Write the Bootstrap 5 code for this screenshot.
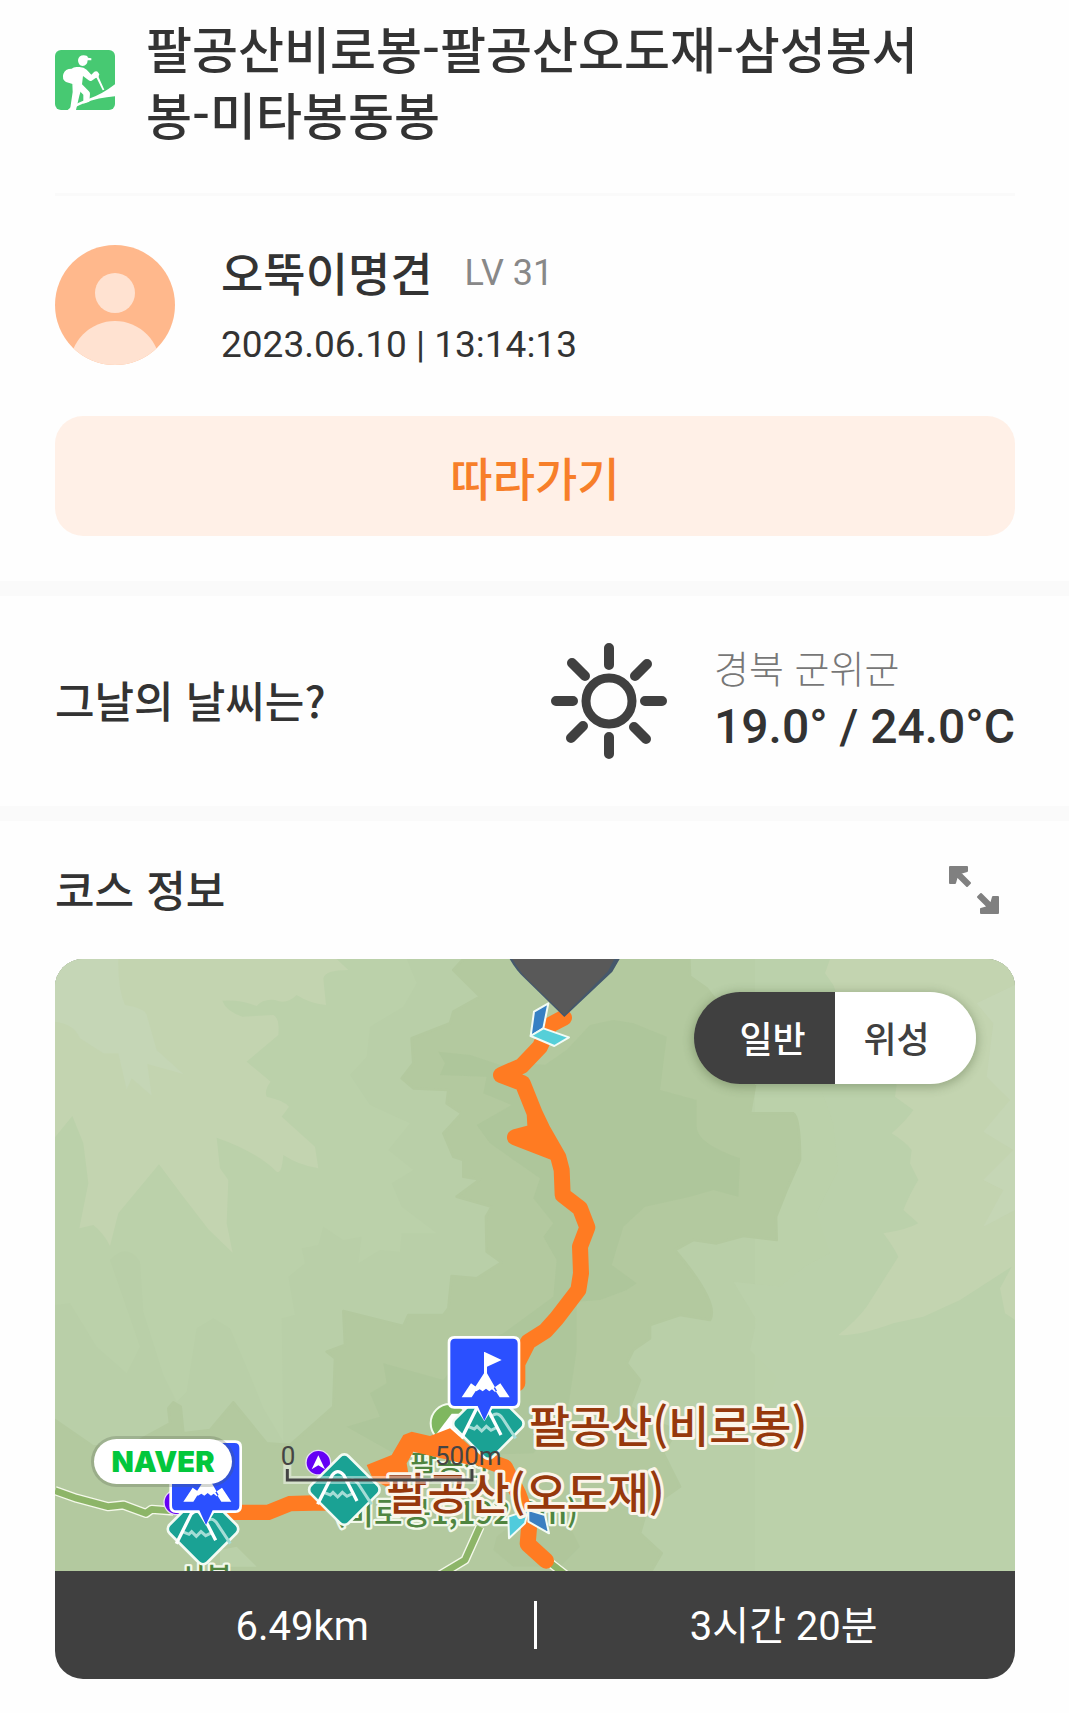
<!DOCTYPE html>
<html lang="ko">
<head>
<meta charset="utf-8">
<meta name="viewport" content="width=device-width, initial-scale=1">
<title>팔공산 코스 정보</title>
<link href="https://cdn.jsdelivr.net/npm/bootstrap@5.3.0/dist/css/bootstrap.min.css" rel="stylesheet">
<style>
  body { font-family: "Noto Sans CJK KR", sans-serif; color: #333; background: #fefefe; }
  .page-pad { padding-left: 55px; padding-right: 54px; }
  .figures { font-family: Roboto, "Noto Sans CJK KR", sans-serif; }
  .course-head { padding-top: 14px; padding-bottom: 47px; gap: 31px; }
  .course-title { font-size: 50px; line-height: 66px; font-weight: 500; max-width: 800px; word-break: break-all; }
  .thin-rule { height: 3px; background: #fafafa; }
  .profile { padding-top: 45px; gap: 46px; }
  .user-name { font-size: 46px; line-height: 60px; font-weight: 500; }
  .user-level { font-size: 36px; line-height: 56px; color: #888; }
  .user-date { font-size: 37px; line-height: 48px; margin-top: 20px; }
  .follow-btn { height: 120px; margin-top: 47px; margin-bottom: 45px; border: 0; border-radius: 28px; background: #fff0e7; color: #f77f2a; font-size: 46px; font-weight: 500; line-height: 60px; }
  .follow-btn:hover { background: #ffe6d7; color: #f77f2a; }
  .band { height: 15px; background: #fafafa; }
  .weather { height: 210px; }
  .section-title { font-size: 43px; line-height: 60px; font-weight: 500; }
  .weather-info { gap: 46px; }
  .region { font-size: 38px; line-height: 56px; font-weight: 300; color: #777; }
  .temps { font-size: 48px; line-height: 64px; font-weight: 500; }
  .course-bar { height: 138px; }
  .expand-btn { padding: 0 16px; border: 0; background: none; }
  .course-card { border-radius: 28px; margin-bottom: 34px; background: #404040; }
  .map-view { height: 612px; background: #bbd1aa; }
  .map-toggle { top: 33px; right: 39px; width: 282px; height: 92px; border-radius: 46px; box-shadow: 0 2px 10px 2px rgba(60,80,40,.3); }
  .map-toggle button { width: 50%; border: 0; font-size: 36px; line-height: 50px; font-weight: 500; background: #fff; color: #404040; padding: 0 18px 2px 0; }
  .map-toggle button.on { background: #404040; color: #fff; padding: 0 0 2px 16px; }
  .naver-pill { left: 39px; top: 480px; width: 138px; height: 45px; border-radius: 23px; background: #fff; color: #03c73c; font-family: Inter, sans-serif; font-weight: 900; font-size: 29px; line-height: 45px; box-shadow: 0 0 0 3px rgba(80,90,70,.25); }
  .stats { height: 108px; color: #fff; font-size: 40px; line-height: 60px; }
  .stat-rule { width: 3px; height: 48px; background: #fff; }
</style>
<script src="https://cdn.jsdelivr.net/npm/bootstrap@5.3.0/dist/js/bootstrap.bundle.min.js"></script>
</head>
<body>
<main>
  <section class="page-pad">
    <header class="course-head d-flex align-items-center">
      <svg class="flex-shrink-0" width="60" height="60" viewBox="0 0 180 180" aria-hidden="true">
        <rect width="180" height="180" rx="18" fill="#47c972"/>
        <g fill="#fff">
          <path d="M69 30q2-14 17-14 11 0 13 7l10 2v6H98q-1 16-15 17-14-1-14-18z"/>
          <path d="M50 56q6-6 18-5 17-2 27 8l14 15 9-9q8-3 12 3l3 5-3 9-8 2-12 8q-5 2-9-1L84 78l-3 25 20 20q4 4 4 8l-2 24-18 6 0-27-22-22-8-9-22-7q-13-8-8-24 5-16 25-16z"/>
          <path d="M52 100l27 17-6 20-10 43H45l8-54z"/>
          <path d="M122 78l6-3 20 44-5 2z"/>
          <path d="M38 180q20-20 62-33 40-13 80-44v36q-50 4-92 20-20 8-42 21z"/>
        </g>
      </svg>
      <h1 class="course-title mb-0">팔공산비로봉-팔공산오도재-삼성봉서봉-미타봉동봉</h1>
    </header>
    <div class="thin-rule"></div>
    <div class="profile d-flex align-items-center">
      <svg class="flex-shrink-0" width="120" height="120" viewBox="0 0 120 120" role="img" aria-label="프로필">
        <clipPath id="face"><circle cx="60" cy="60" r="60"/></clipPath>
        <g clip-path="url(#face)"><rect width="120" height="120" fill="#ffb88c"/><circle cx="60" cy="48" r="20" fill="#ffe2d1"/><circle cx="60" cy="121" r="45" fill="#ffe2d1"/></g>
      </svg>
      <div>
        <div class="d-flex align-items-center">
          <span class="user-name">오뚝이명견</span>
          <span class="user-level figures ms-4 ps-2 pt-1">LV 31</span>
        </div>
        <div class="user-date figures">2023.06.10 | 13:14:13</div>
      </div>
    </div>
    <button type="button" class="btn follow-btn w-100">따라가기</button>
  </section>
  <div class="band"></div>
  <section class="weather page-pad d-flex align-items-center justify-content-between">
    <h2 class="section-title mb-0 pb-1">그날의 날씨는?</h2>
    <div class="weather-info d-flex align-items-center">
      <svg width="118" height="118" viewBox="-59 -59 118 118" role="img" aria-label="맑음">
        <g fill="none" stroke="#404040"><circle r="23" stroke-width="9"/>
        <path stroke-width="10" stroke-linecap="round" d="M0-53v17M0 53v-17M-53 0h17M53 0h-17M-37-38l13 13M38-37l-12 12M-38 37l12-12M37 38l-12-12"/></g>
      </svg>
      <div class="pb-1">
        <div class="region">경북 군위군</div>
        <div class="temps figures">19.0° / 24.0°C</div>
      </div>
    </div>
  </section>
  <div class="band"></div>
  <section class="page-pad">
    <div class="course-bar d-flex align-items-center justify-content-between">
      <h2 class="section-title mb-0 pb-1">코스 정보</h2>
      <button type="button" class="expand-btn" aria-label="지도 확대">
        <svg class="d-block" width="50" height="50" viewBox="0 0 50 50" fill="none" stroke="#808080" stroke-linejoin="round"><path fill="#808080" stroke-width="2" d="M1 2h17v4l-7 2 10 10-3 3L8 11l-2 7H1zM49 48H32v-4l7-2-10-10 3-3 10 10 2-7h5z"/></svg>
      </button>
    </div>
    <div class="course-card overflow-hidden">
      <div class="map-view position-relative overflow-hidden">
        <svg class="d-block" width="100%" height="612" viewBox="0 0 2880 1836" preserveAspectRatio="xMidYMid slice" role="img" aria-label="코스 지도">
          <defs>
            <g id="peak">
              <rect x="-80" y="-80" width="160" height="160" rx="18" transform="rotate(45)" fill="#1aa294" stroke="#f3fbf3" stroke-width="8"/>
              <path d="M6-18Q26-42 44-14L82 44M-62 8l20 8 8-8 14 14 14-14 14 12 20-10" fill="none" stroke="#a5ddd6" stroke-width="9"/>
              <path d="M-80 44l44-88q16-20 34 0l40 78" fill="none" stroke="#fff" stroke-width="10"/>
            </g>
            <g id="summit">
              <path d="M16-4h178q20 0 20 20v178q0 20-20 20h-64l-24 38-24-38H16q-20 0-20-20V16Q-4-4 16-4z" fill="#fff"/>
              <path d="M18 4h174q14 0 14 14v174q0 14-14 14h-66l-20 44-20-44H18q-14 0-14-14V18Q4 4 18 4z" fill="#2b50ff"/>
              <path d="M107 44l51 24-44 20v20l30 52-6 4-9-8-8 6-10-8-10 8-9-6-10 6-8-6 31-48V44zM38 180l28-42 20 14 -18 28zM182 180l-28-42-20 14 18 28z" fill="#fff"/>
            </g>
            <g id="nav"><circle r="37" fill="#6500f5" stroke="#e9ddf5" stroke-width="4"/><path d="M0-22L20 20 0 8l-20 12z" fill="#fff"/></g>
          </defs>
          <!-- terrain, left and centre -->
          <g transform="translate(-15 -27)" stroke-linejoin="round">
            <path fill="#b9cfa8" d="M1070 27l30 73-40 70-100 60-10 90-50 55 60 90 120 55-65 80 75 60-65 40 30 70 105 80-105 0-5 55-60-5-65 40 10-80-55 10-60-40-15 55-50 10 10 45-50 40 20 115-40 10 5 370-60-100-40-100-60-140-50-30-50 30-30 190-30 30-40-80-60-190-10-150q-40-60-90-5L270 1190l-40 80-90-80L60 1060l-45 5v800h2100V27z"/>
            <path fill="#c3d4b0" d="M15 27h845l35 33q-70 0-75 25l8 80q-50-5-88-30-30 30-65 15-35-5-55 18-50-20-103-16 10 30 60 48l93-5q20 10 15 60l-95 80 72 60q-20 25-12 45 50 10 67 30l-22 30 100 90 10 65q-60-10-105-40-5 60-20 50-60-60-180-102l10 92 25 35-5 130 18 88-73-70-75-98-73-97-122 147-25 98q-20-40-50-63l-42 10 27-135-15-120-33-82-52 64z"/>
            <path fill="#c5d6b6" d="M15 27h190q-2 90 20 138 60 10 65 30l30 105 80 72-108-30 13 95-60-52-15 33-25-108h-45l-70-45q-20-45-75-50z"/>
            <path fill="#b3c99f" stroke="#b3c99f" stroke-width="8" d="M1240 27L1210 60 1290 140 1210 185 1200 220 1085 265 1090 340 1055 385 1090 415 1195 420 1190 460 1235 490 1180 550 1210 620 1240 630 1240 680 1290 688 1220 740 1325 770 1308 800 1310 905 1355 937 1280 985 1205 978 1195 1075 1180 1095 1075 1095 1060 1128 880 1083 885 1185 830 1205 855 1225 850 1370 760 1450 720 1485 650 1480 550 1357 480 1440 400 1450 392 1370 370 1357 355 1375 360 1420 250 1480 130 1490 15 1410V1870H1800L1835 1810 1770 1750 1790 1680 1890 1610 1840 1510 1880 1440 1800 1410 1740 1370 1770 1290 1730 1240 1750 1200 1800 1165 1800 1125 1890 1095 1980 1110Q2010 1060 1875 900L1930 870 2000 880 2080 858 2180 870 2178 800 2210 720 2250 630Q2250 500 2230 490H2100L2115 405 2115 300 1970 115 1920 80 1918 27z"/>
          </g>
          <g transform="translate(1335 -27)">
            <path fill="#adc59a" opacity=".85" d="M340 210L270 225 200 300 135 345 80 340 0 345-90 315-185 305-165 340-180 375-40 380-50 430 35 465-70 525-30 580 120 685 100 745 160 820 130 860 170 930 160 1040 10 1150-100 1200-170 1290-350 1240-340 1300-390 1330-360 1400-460 1430-300 1520 100 1510 200 1400 230 1200 230 1055 300 1050 380 1020 410 1000 335 945 370 830 435 770 570 740 640 720 715 740 720 625Q590 580 590 530V450L480 420 500 260 400 220z"/>
            <path fill="#adc59a" opacity=".6" d="M-10 1760l-10 40 60 50h140l60-60-40-80-120-20z"/>
            <path fill="#bad0a9" d="M-840 1800l50-10 60 60h-110z"/>
          </g>
          <!-- terrain, east side -->
          <g transform="translate(1335 -27)">
            <path fill="#bcd1ab" opacity=".8" d="M765 27v378l200 15 35 100 15 140-65 130 40 120-75 40-75 60-140-15 70 115-20 90 80 80-40 120h750V27z"/>
            <path fill="#c3d4b0" d="M990 27L975 70 1000 105 1060 260 1190 405 1185 440 1240 480Q1220 510 1175 550 1215 575 1235 600L1230 640 1255 690Q1230 730 1210 780L1255 820Q1220 840 1150 850 1180 890 1195 920 1170 960 1100 1070 1070 1110 1015 1155 1070 1160 1180 1120L1270 1100 1380 1050 1535 950 1500 1015 1515 1090 1545 1110V27z"/>
            <path fill="#c5d6b6" opacity=".8" d="M1545 105l-115 55 50 60-20 160 70 70-80 95 90 55-90 90 60 30-60 110 95-50z"/>
          </g>
          <!-- footpaths -->
          <g fill="none" stroke-linejoin="round">
            <g stroke="#f4f8ea" stroke-width="28"><path d="M0 1595l65 23 95 25 45-5 68 25 17-12 65 5"/><path d="M1275 1703l-45 100-75 45M1445 1780l90 70"/></g>
            <g stroke="#8db568" stroke-width="20"><path d="M0 1595l65 23 95 25 45-5 68 25 17-12 65 5"/><path d="M1275 1703l-45 100-75 45M1445 1780l90 70"/></g>
          </g>
          <circle cx="1185" cy="1393" r="58" fill="#7fb75f" stroke="#f4fbee" stroke-width="6"/>
          <path d="M1140 1430l50-66h30v70z" fill="#fff"/>
          <!-- summit name printed on the base map -->
          <g font-family="Noto Sans CJK KR, sans-serif" font-weight="500" fill="#4f8540" stroke="#f2f8ea" stroke-width="14" stroke-linejoin="round" paint-order="stroke">
            <text x="1066" y="1552" font-size="87">팔공산</text>
            <text x="838" y="1696" font-size="93">(비로봉1,192.3m)</text>
            <text x="372" y="1890" font-size="87">서봉</text>
          </g>
          <!-- recorded track -->
          <g fill="none" stroke="#ff7b22" stroke-width="48" stroke-linecap="round" stroke-linejoin="round">
            <path transform="translate(1335 -27)" d="M192 203L150 225 120 290 65 348 3 375 68 400 104 490 107 545 45 562 165 608 128 540 104 490 128 540 175 622 185 660 188 735 240 775 262 832 240 890 243 970 235 1020 170 1105 137 1142 85 1175 52 1240 52 1300"/>
            <path d="M1275 1497l75 28 40 80 33 90-5 60 55 50"/>
            <path d="M860 1632l-85 0-70 2-65 26h-110" stroke-width="46" stroke-linejoin="miter"/>
            <path d="M935 1518l75-30 35-60 25-10 55 13 60-23 90 80-30 30-170-40-20 35 5 30-65 40-40-20z" fill="#ff7b22" stroke="none"/>
          </g>
          <path d="M1364 0q20 35 45 58l119 116L1672 38l22-38z" fill="#45586c"/>
          <path d="M1372 0q20 35 42 58l114 110L1658 38l20-38z" fill="#595959"/>
          <g stroke="#f2fbf5" stroke-width="6" stroke-linejoin="round">
            <path d="M1437 158l43-25-15 75-38 23z" fill="#3680c4"/><path d="M1427 231l38-23 77 27-44 26z" fill="#56cfd8"/>
            <path d="M1360 1673l60-20-10 40-48 45z" fill="#50cbdc"/><path d="M1420 1653l50 15 12 55-62-35z" fill="#3b7fc1"/>
          </g>
          <use href="#nav" x="790" y="1511"/><use href="#nav" x="364" y="1630"/>
          <use href="#peak" x="1300" y="1394"/><use href="#peak" x="868" y="1592"/><use href="#peak" x="444" y="1710"/>
          <use href="#summit" x="1182" y="1135"/><use href="#summit" x="347" y="1448"/>
          <g font-family="Noto Sans CJK KR, sans-serif" font-weight="500" font-size="134" fill="#96380c" stroke="#fbf5ea" stroke-width="18" stroke-linejoin="round" paint-order="stroke">
            <text x="1422" y="1453">팔공산(비로봉)</text><text x="994" y="1654">팔공산(오도재)</text>
          </g>
          <path d="M697 1526v37h554v-37" fill="none" stroke="#fff" stroke-opacity=".45" stroke-width="24" stroke-linecap="square"/>
          <path d="M697 1530v33h554v-33" fill="none" stroke="#444" stroke-width="9"/>
          <g font-family="Roboto, sans-serif" font-size="78" fill="#444"><text x="677" y="1517">0</text><text x="1140" y="1517">500m</text></g>
        </svg>
        <div class="map-toggle position-absolute d-flex overflow-hidden" role="group" aria-label="지도 종류">
          <button type="button" class="on" aria-pressed="true">일반</button>
          <button type="button" aria-pressed="false">위성</button>
        </div>
        <div class="naver-pill position-absolute text-center">NAVER</div>
      </div>
      <div class="stats figures d-flex align-items-center">
        <div class="flex-fill w-50 text-center ps-3 pt-1">6.49km</div>
        <div class="stat-rule flex-shrink-0"></div>
        <div class="flex-fill w-50 text-center ps-3 pt-1">3시간 20분</div>
      </div>
    </div>
  </section>
</main>
</body>
</html>
